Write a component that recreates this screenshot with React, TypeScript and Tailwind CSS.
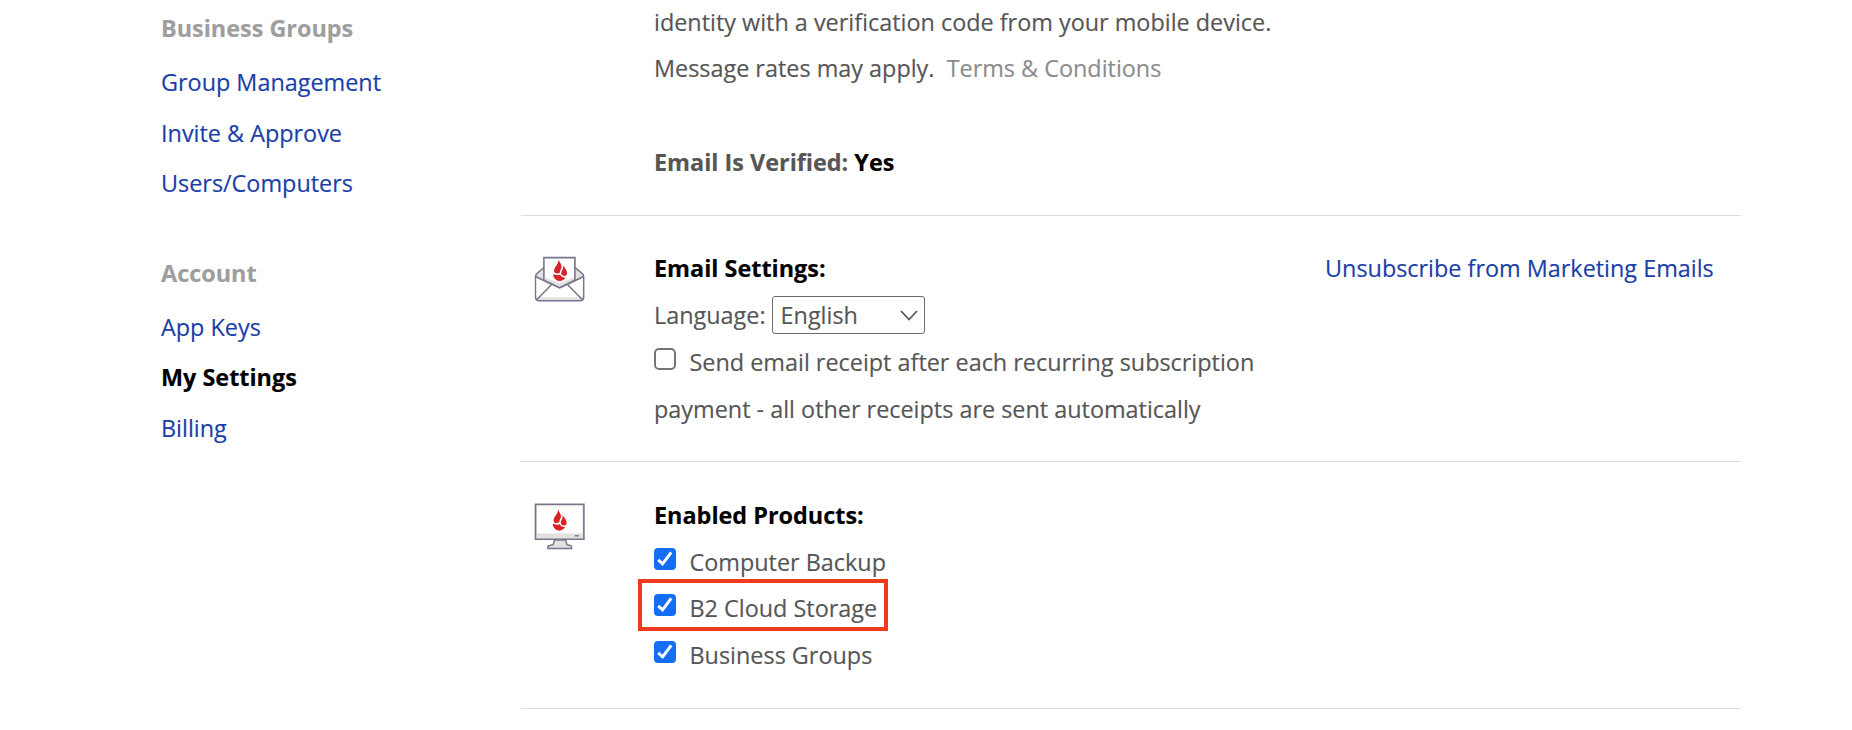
import type { ReactNode } from 'react';

function Flame({ x, y }: { x: number; y: number }) {
  return (
    <g transform={`translate(${x} ${y})`} fill="#d8232a">
      <path d="M5.5 -.8C6.3 1.8 8.6 3.4 8.5 6.6C8.4 8.6 6.8 9.8 6.8 12.3C5 13.4 3.2 13.2 1.8 12.4C.8 11 .9 9.4 1.8 7.6C3.4 4.8 5.8 3 5.5 -.8Z" />
      <path d="M9.9 4.6C11 7.4 14.3 9.8 14.1 12.9C14 15.2 11.8 16.1 9.8 15.2C7.9 14.2 7.8 12.2 8.8 10.6C9.9 9 10.5 7 9.9 4.6Z" />
      <path d="M.4 13.6C2.4 15 4.8 14.8 7.2 14.3C8.2 16.2 10.2 17.3 12.6 17.1C11.2 19.6 8.8 20.9 6.2 20.6C2.8 20.2 0 17.4.4 13.6Z" />
    </g>
  );
}

function EnvelopeIcon() {
  return (
    <svg width="52" height="48" viewBox="0 0 52 48" fill="none" className="block">
      <path d="M10 11.5L3 17.5Q1.6 18.7 1.6 20.5V41Q1.6 44.7 5.2 44.7H46Q49.6 44.7 49.6 41V20.5Q49.6 18.7 48.2 17.5L41 11.5Z" fill="#e3e1dd" stroke="#77748f" strokeWidth="1.6" />
      <path d="M2.4 21.5L17 30L3.4 42.3Q2.4 41.4 2.4 40ZM48.8 21.5L34 30L47.8 42.3Q48.8 41.4 48.8 40Z" fill="#fff" />
      <path d="M5 41.3L18.5 28.5L25.6 31.8L32.7 28.5L46.2 41.3Z" fill="#fff" />
      <path d="M9.9 1.6H40.9V23.5L25.6 31.3L9.9 23.5Z" fill="#fff" stroke="#77748f" strokeWidth="1.6" />
      <path d="M10.7 21L25.6 27.6L40.1 21V23.8L25.6 31L10.7 23.8Z" fill="#e3e1dd" />
      <path d="M2 20.7L25.6 32L49.2 20.7M3.2 43.2L17.6 28.5M48 43.2L33.4 28.5" stroke="#77748f" strokeWidth="1.5" />
      <Flame x={19} y={4.4} />
    </svg>
  );
}

function MonitorIcon() {
  return (
    <svg width="52" height="48" viewBox="0 0 52 48" fill="none" className="block">
      <path d="M20.6 37H31.5L33 41.7L37 42.7Q37.6 43 37.6 45.4H13.7Q13.7 43 14.5 42.7L19.1 41.7Z" fill="#e3e1dd" stroke="#77748f" strokeWidth="1.5" />
      <path d="M1.5 1.2H49.9V36.3H1.5Z" fill="#e3e1dd" stroke="#77748f" strokeWidth="1.6" />
      <path d="M3.1 3.2H48.3V30.5H3.1Z" fill="#fff" />
      <path d="M40.8 32.8H44.8" stroke="#77748f" strokeWidth="1.4" />
      <Flame x={18.5} y={7} />
    </svg>
  );
}

function Checkbox({ checked = false }: { checked?: boolean }) {
  return checked ? (
    <span className="mr-[13.5px] block h-[22px] w-[22px] shrink-0 rounded-[4px] bg-[#146ef5]">
      <svg width="22" height="22" viewBox="0 0 22 22" fill="none" className="block">
        <path d="M4.2 11.8L8.6 15.8L17.2 4.4" stroke="#fff" strokeWidth="3" />
      </svg>
    </span>
  ) : (
    <span className="mr-[13.5px] block h-[22px] w-[22px] shrink-0 rounded-[5px] border-2 border-[#767676] bg-white" />
  );
}

function NavLink({ children, active = false }: { children: ReactNode; active?: boolean }) {
  return (
    <a className={active ? 'block h-[50.5px] font-bold text-black' : 'block h-[50.5px] text-[#1a40a8]'}>
      {children}
    </a>
  );
}

function Product({ name, highlighted = false }: { name: string; highlighted?: boolean }) {
  return (
    <div className="relative flex h-[46.6px] w-fit">
      <span className="mt-[9px] flex">
        <Checkbox checked />
      </span>
      {name}
      {highlighted && (
        <span className="absolute -left-4 -top-[6px] h-[52px] w-[250px] border-4 border-[#f03a1e]" />
      )}
    </div>
  );
}

export default function App() {
  return (
    <div className="flex h-[730px] w-[1852px] overflow-hidden bg-white font-['Open_Sans',sans-serif] text-[23.4px] leading-[47px] text-[#565656] [-webkit-text-stroke:0.15px]">
      <nav className="w-[521px] shrink-0 pl-[161px] pt-[5px]">
        <h2 className="h-[54px] font-bold text-[#9e9e9e]">Business Groups</h2>
        <NavLink>Group Management</NavLink>
        <NavLink>Invite &amp; Approve</NavLink>
        <NavLink>Users/Computers</NavLink>
        <h2 className="mt-[39.1px] h-[54px] font-bold text-[#9e9e9e]">Account</h2>
        <NavLink>App Keys</NavLink>
        <NavLink active>My Settings</NavLink>
        <NavLink>Billing</NavLink>
      </nav>

      <main className="w-[1220px] shrink-0">
        <section className="flow-root h-[216px] border-b border-[#dedede] pl-[133px]">
          <div className="-mt-px leading-[46px]">
            <p>
              identity with a verification code from your mobile device.
              <br />
              Message rates may apply.&nbsp; <a className="text-[#8c8c8c]">Terms &amp; Conditions</a>
            </p>
            <p className="mt-[48px] font-bold">
              Email Is Verified: <span className="text-black">Yes</span>
            </p>
          </div>
        </section>

        <section className="flex h-[246px] border-b border-[#dedede] pt-[29px]">
          <div className="w-[133px] shrink-0 pl-[12.5px] pt-[11px]">
            <EnvelopeIcon />
          </div>
          <div className="w-[671px] shrink-0">
            <h3 className="font-bold text-black">Email Settings:</h3>
            <div className="flex h-[47px]">
              Language:
              <span className="ml-[6px] mt-[4px] flex h-[38px] w-[153px] items-center justify-between rounded-[3px] border border-[#6b6b6b] pl-[8px] pr-[6px]">
                English
                <svg width="18" height="11" viewBox="0 0 18 11" fill="none">
                  <path d="M1 1L9 9.5L17 1" stroke="#595959" strokeWidth="1.8" />
                </svg>
              </span>
            </div>
            <div className="flex h-[47px]">
              <span className="mt-[9px] flex">
                <Checkbox />
              </span>
              Send email receipt after each recurring subscription
            </div>
            <div>payment - all other receipts are sent automatically</div>
          </div>
          <a className="whitespace-nowrap text-[#1a40a8]">Unsubscribe from Marketing Emails</a>
        </section>

        <section className="flex h-[247px] border-b border-[#dedede] pt-[30px]">
          <div className="w-[133px] shrink-0 pl-[12.5px] pt-[11px]">
            <MonitorIcon />
          </div>
          <div>
            <h3 className="h-[46.6px] font-bold text-black">Enabled Products:</h3>
            <Product name="Computer Backup" />
            <Product name="B2 Cloud Storage" highlighted />
            <Product name="Business Groups" />
          </div>
        </section>
      </main>
    </div>
  );
}
